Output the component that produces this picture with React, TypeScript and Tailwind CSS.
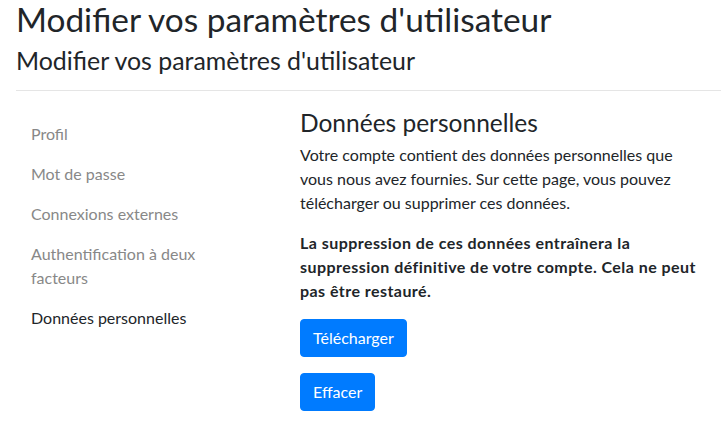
import React from "react";

const navItems = [
  { label: "Profil", active: false },
  { label: "Mot de passe", active: false },
  { label: "Connexions externes", active: false },
  { label: "Authentification à deux facteurs", active: false },
  { label: "Données personnelles", active: true },
];

export default function App() {
  return (
    <div className="min-h-[431px] bg-white text-[#212529] font-['Lato',sans-serif]">
      <div className="pl-[16px]">
        <h1 className="m-0 text-[33.4px] leading-[38px] font-normal">
          Modifier vos paramètres d'utilisateur
        </h1>
        <h4 className="mt-[7px] text-[24.9px] leading-[30px] font-normal">
          Modifier vos paramètres d'utilisateur
        </h4>
        <hr className="mt-[15px] border-0 border-t border-[#e5e5e5]" />
      </div>
      <div className="flex pt-[17px]">
        <div className="w-[240px] shrink-0 pl-[15px] pr-[15px] pt-[6px]">
          <ul className="flex flex-col">
            {navItems.map((item) => (
              <li key={item.label}>
                <a
                  className={
                    item.active
                      ? "block px-[16px] py-[8px] text-[16px] leading-[24px] text-[#212529]"
                      : "block px-[16px] py-[8px] text-[16px] leading-[24px] text-[#888888]"
                  }
                  href="#"
                >
                  {item.label}
                </a>
              </li>
            ))}
          </ul>
        </div>
        <div className="ml-[60px] w-[406px]">
          <h3 className="m-0 text-[24.5px] leading-[29px] font-normal">Données personnelles</h3>
          <p className="mt-[6px] text-[16px] leading-[24px]">
            Votre compte contient des données personnelles que vous nous avez fournies. Sur cette
            page, vous pouvez télécharger ou supprimer ces données.
          </p>
          <p className="mt-[16px] text-[16px] leading-[24px] font-bold tracking-[0.45px]">
            La suppression de ces données entraînera la suppression définitive de votre compte. Cela
            ne peut pas être restauré.
          </p>
          <div className="mt-[16px] flex flex-col items-start gap-[16px]">
            <button className="h-[38px] rounded-[4px] border border-[#007bff] bg-[#007bff] px-[12px] text-[16px] leading-[24px] text-white">
              Télécharger
            </button>
            <button className="h-[38px] rounded-[4px] border border-[#007bff] bg-[#007bff] px-[12px] text-[16px] leading-[24px] text-white">
              Effacer
            </button>
          </div>
        </div>
      </div>
    </div>
  );
}
